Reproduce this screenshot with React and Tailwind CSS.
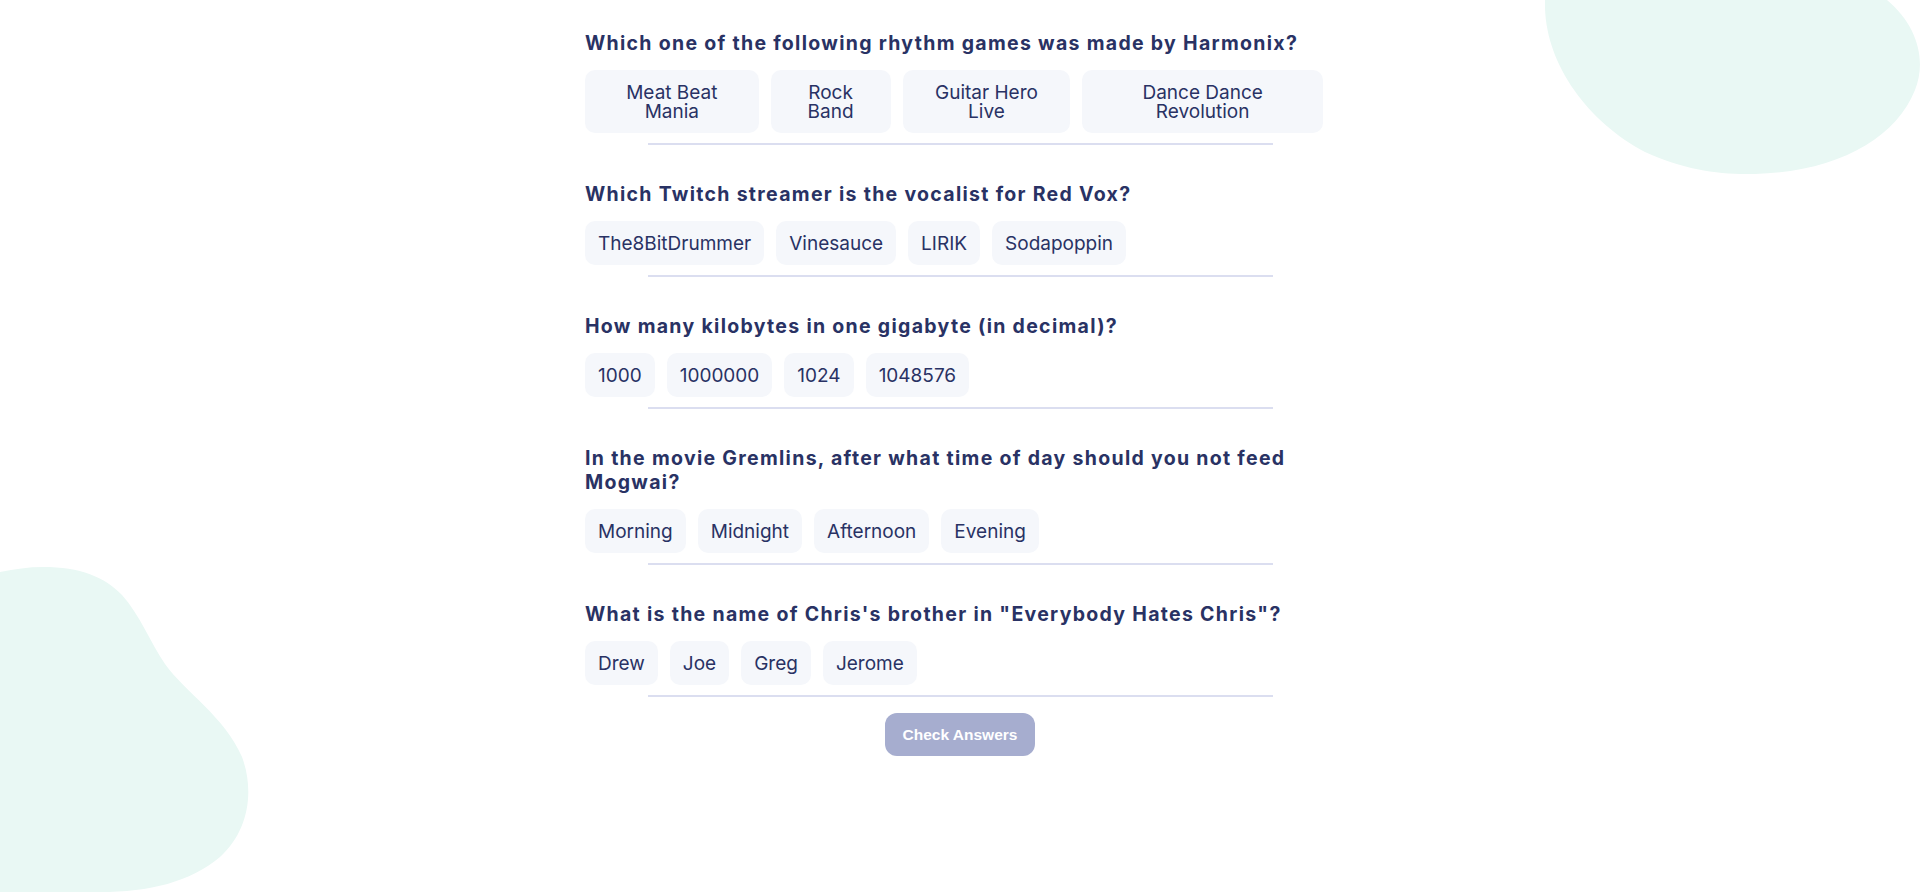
import { useState } from 'react';

const questions = [
  {
    question: 'Which one of the following rhythm games was made by Harmonix?',
    answers: ['Meat Beat Mania', 'Rock Band', 'Guitar Hero Live', 'Dance Dance Revolution'],
  },
  {
    question: 'Which Twitch streamer is the vocalist for Red Vox?',
    answers: ['The8BitDrummer', 'Vinesauce', 'LIRIK', 'Sodapoppin'],
  },
  {
    question: 'How many kilobytes in one gigabyte (in decimal)?',
    answers: ['1000', '1000000', '1024', '1048576'],
  },
  {
    question: 'In the movie Gremlins, after what time of day should you not feed Mogwai?',
    answers: ['Morning', 'Midnight', 'Afternoon', 'Evening'],
  },
  {
    question: 'What is the name of Chris\'s brother in "Everybody Hates Chris"?',
    answers: ['Drew', 'Joe', 'Greg', 'Jerome'],
  },
];

function Question({ q, selected, onSelect, first }) {
  return (
    <div className={first ? 'mt-[30px]' : 'mt-[37px]'}>
      <h2 className="font-['Inter',sans-serif] font-bold text-[19.5px] leading-[24px] tracking-[1.3px] text-[#293264]">
        {q.question}
      </h2>
      <div className="flex mt-[15px]">
        {q.answers.map((a) => (
          <button
            key={a}
            onClick={() => onSelect(a)}
            className={`mr-3 px-[13px] py-[12.5px] rounded-[10px] text-center font-['Inter',sans-serif] text-[19px] leading-[19px] text-[#293264] ${
              selected === a ? 'bg-[#D6DBF5]' : 'bg-[#F5F7FB]'
            }`}
          >
            {a}
          </button>
        ))}
      </div>
      <div className="w-[625px] h-[2px] mx-auto mt-[10px] bg-[#DBDEF0]" />
    </div>
  );
}

export default function App() {
  const [picks, setPicks] = useState({});

  return (
    <div className="relative min-h-screen overflow-hidden bg-white">
      <svg className="absolute top-0 right-0" width="375" height="175" viewBox="0 0 375 175">
        <path
          d="M0,0 C-2,60 40,120 100,152 C140,170 175,175 210,174 C290,172 350,140 370,90 C382,60 372,25 342,0 Z"
          fill="#E9F8F4"
        />
      </svg>
      <svg className="absolute bottom-0 left-0" width="250" height="325" viewBox="0 0 250 325">
        <path
          d="M0,5 C15,2 28,0 43,0 C80,0 105,10 122,28 C140,48 150,75 165,97 C185,125 225,150 242,190 C255,225 248,265 220,290 C190,315 150,325 100,325 L0,325 Z"
          fill="#E9F8F4"
        />
      </svg>

      <div className="relative w-[750px] mx-auto pt-px">
        {questions.map((q, i) => (
          <Question
            key={i}
            q={q}
            first={i === 0}
            selected={picks[i]}
            onSelect={(a) => setPicks({ ...picks, [i]: a })}
          />
        ))}
        <div className="flex justify-center mt-4">
          <button className="px-[18px] py-[12px] rounded-[12px] bg-[#A6ADCF] text-white font-['Liberation_Sans',Arial,sans-serif] font-bold text-[15.5px] leading-[19px]">
            Check Answers
          </button>
        </div>
      </div>
    </div>
  );
}
